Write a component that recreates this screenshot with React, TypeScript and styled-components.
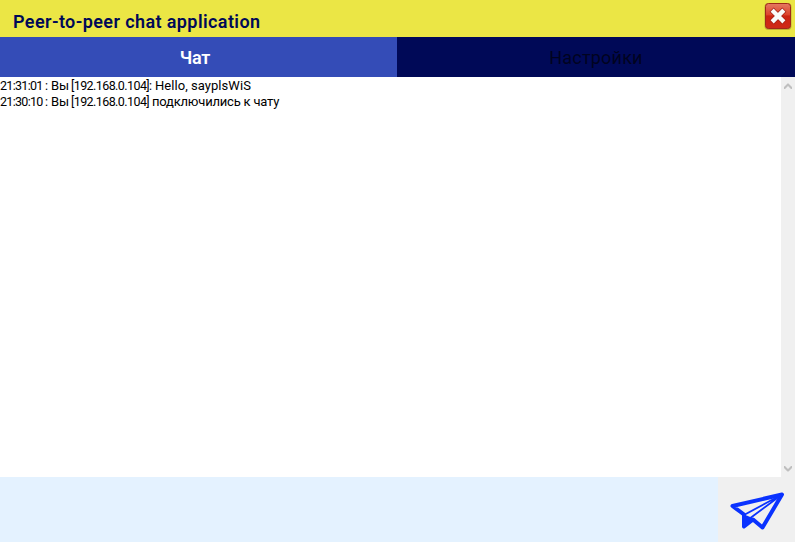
import React from "react";
import styled, { createGlobalStyle } from "styled-components";

const GlobalStyle = createGlobalStyle`
  * { box-sizing: border-box; }
  body { margin: 0; font-family: Roboto, "Liberation Sans", sans-serif; overflow: hidden; }
  button { border: 0; padding: 0; background: none; font-family: inherit; }
`;

const Window = styled.div`
  display: flex;
  flex-direction: column;
  width: 795px;
  height: 542px;
  background: #f0f0f0;
`;

const TitleBar = styled.header`
  display: flex;
  align-items: flex-start;
  justify-content: space-between;
  height: 37px;
  padding: 2px 3px 0 13px;
  background: #ebe645;
`;

const Title = styled.h1`
  margin: 0;
  padding-top: 9px;
  font-size: 18px;
  line-height: 21px;
  font-weight: 600;
  letter-spacing: 0.4px;
  color: #000957;
  white-space: nowrap;
`;

const CloseButton = styled.button`
  width: 28px;
  height: 28px;
  svg { display: block; }
`;

const Tabs = styled.nav`
  display: grid;
  grid-template-columns: 397px 398px;
  height: 40px;
`;

const Tab = styled.button<{ $active?: boolean }>`
  padding: 1px ${(p) => (p.$active ? "7px 0 0" : "0 0 0")};
  background: ${(p) => (p.$active ? "#344cb7" : "#000957")};
  color: ${(p) => (p.$active ? "#fff" : "#00031f")};
  font-size: 18px;
  font-weight: ${(p) => (p.$active ? 600 : 400)};
  letter-spacing: ${(p) => (p.$active ? "-0.2px" : "0.2px")};
`;

const Body = styled.main`
  display: flex;
  height: 400px;
`;

const Log = styled.div`
  flex: 1;
  padding-top: 1px;
  background: #fff;
`;

const Message = styled.div`
  display: flex;
  height: 16px;
  font-size: 13px;
  line-height: 16px;
  color: #000;
  white-space: pre;
`;

const Time = styled.span`
  width: 51px;
  font-size: 12.5px;
  letter-spacing: -0.7px;
`;

const Author = styled.span`
  width: 20px;
  letter-spacing: -0.1px;
`;

const Address = styled.span<{ $width: number }>`
  width: ${(p) => p.$width}px;
  font-size: 12.5px;
  letter-spacing: -0.58px;
`;

const Content = styled.span<{ $tight?: boolean }>`
  letter-spacing: ${(p) => (p.$tight ? "-0.2px" : "0.05px")};
`;

const ScrollBar = styled.div`
  display: flex;
  flex-direction: column;
  justify-content: space-between;
  align-items: center;
  width: 14px;
  padding: 6px 0 5px;
`;

const Composer = styled.footer`
  display: flex;
  height: 65px;
`;

const Input = styled.div`
  width: 718px;
  background: #e4f2ff;
`;

const SendButton = styled.button`
  width: 77px;
  svg { display: block; }
`;

const Arrow = ({ down = false }: { down?: boolean }) => (
  <svg width="8" height="7" viewBox="0 0 8 7">
    <path
      d={down ? "M0 1h1l3 3 3-3h1v2L4.5 6.5h-1L0 3z" : "M0 6h1l3-3 3 3h1V4L4.5 .5h-1L0 4z"}
      fill="#bfbfbf"
    />
  </svg>
);

const CloseIcon = () => (
  <svg width="28" height="28" viewBox="0 0 28 28">
    <defs>
      <linearGradient id="red" x1="0" y1="0" x2="0" y2="1">
        <stop offset="0" stopColor="#e47a62" />
        <stop offset="0.45" stopColor="#dc432c" />
        <stop offset="0.5" stopColor="#cc2412" />
        <stop offset="1" stopColor="#cf2a18" />
      </linearGradient>
    </defs>
    <rect x="0.5" y="1" width="27" height="27" rx="4" fill="#8a6d25" opacity="0.45" />
    <rect x="1.5" y="1.5" width="25" height="25" rx="3" fill="url(#red)" stroke="#a0281a" />
    <path d="M9.7 9.7l8.6 8.6M18.3 9.7L9.7 18.3" stroke="#a52318" strokeWidth="5.8" strokeLinecap="square" />
    <path d="M9.7 9.7l8.6 8.6M18.3 9.7L9.7 18.3" stroke="#fafafa" strokeWidth="4.4" strokeLinecap="square" />
  </svg>
);

const PlaneIcon = () => (
  <svg width="77" height="65" viewBox="0 0 77 65">
    <g fill="none" stroke="#0a32ff" strokeLinejoin="round" strokeLinecap="round">
      <path d="M14.5 29L64 17.5 44.5 50.5 35 42.5 26 49.5V37.5z" strokeWidth="4" />
      <path d="M26 38L64 17.5 31 42" strokeWidth="1.8" />
    </g>
    <path d="M25 37l12 5-12 9z" fill="#0a32ff" />
  </svg>
);

const messages = [
  { time: "21:31:01 :  ", address: "[192.168.0.104]: ", width: 84, text: "Hello, sayplsWiS" },
  { time: "21:30:10 : ", address: "[192.168.0.104] ", width: 81, text: "подключились к чату", tight: true },
];

export default function App() {
  return (
    <>
      <GlobalStyle />
      <Window>
        <TitleBar>
          <Title>Peer-to-peer chat application</Title>
          <CloseButton aria-label="Close"><CloseIcon /></CloseButton>
        </TitleBar>
        <Tabs>
          <Tab $active>Чат</Tab>
          <Tab>Настройки</Tab>
        </Tabs>
        <Body>
          <Log>
            {messages.map((m) => (
              <Message key={m.time}>
                <Time>{m.time}</Time>
                <Author>Вы</Author>
                <Address $width={m.width}>{m.address}</Address>
                <Content $tight={m.tight}>{m.text}</Content>
              </Message>
            ))}
          </Log>
          <ScrollBar><Arrow /><Arrow down /></ScrollBar>
        </Body>
        <Composer>
          <Input />
          <SendButton aria-label="Send"><PlaneIcon /></SendButton>
        </Composer>
      </Window>
    </>
  );
}
